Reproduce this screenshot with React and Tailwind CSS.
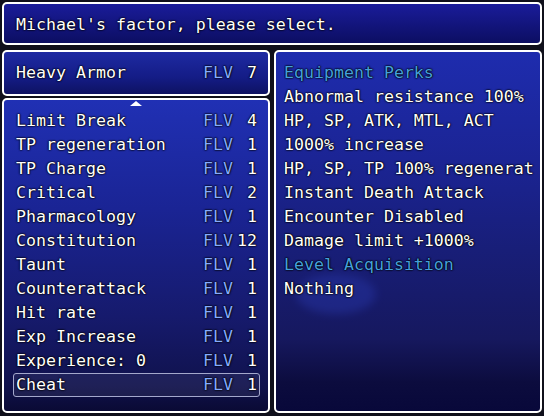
import React from "react";

const items = [
  ["Limit Break", "4"],
  ["TP regeneration", "1"],
  ["TP Charge", "1"],
  ["Critical", "2"],
  ["Pharmacology", "1"],
  ["Constitution", "12"],
  ["Taunt", "1"],
  ["Counterattack", "1"],
  ["Hit rate", "1"],
  ["Exp Increase", "1"],
  ["Experience: 0", "1"],
  ["Cheat", "1"],
];

const perks = [
  ["Equipment Perks", true],
  ["Abnormal resistance 100%", false],
  ["HP, SP, ATK, MTL, ACT", false],
  ["1000% increase", false],
  ["HP, SP, TP 100% regenerat", false],
  ["Instant Death Attack", false],
  ["Encounter Disabled", false],
  ["Damage limit +1000%", false],
  ["Level Acquisition", true],
  ["Nothing", false],
];

const win =
  "relative border-2 border-white rounded-[5px] shadow-[0_0_0_1px_#101018]";

function Row({ name, lv, selected }) {
  return (
    <div
      className={
        "flex h-[24px] items-center " +
        (selected
          ? "rounded-[3px] border border-[#a4a8cc] bg-[#ffffff10] px-[2px]"
          : "px-[3px]")
      }
    >
      <span className="flex-1 text-white">{name}</span>
      <span className="w-[33px] text-[#84aaff]">FLV</span>
      <span className="w-[21px] text-right text-white">{lv}</span>
    </div>
  );
}

export default function App() {
  return (
    <div
      className="flex h-[416px] w-[544px] flex-col gap-[5px] overflow-hidden bg-[#10101c] px-[2px] pb-[3px] pt-[2px] text-[16.6px] leading-[24px] [text-shadow:0_0_2px_#000,0_0_2px_#000,0_0_1px_#000]"
      style={{ fontFamily: '"DejaVu Sans Mono", monospace' }}
    >
      <div
        className={
          win +
          " flex h-[43px] shrink-0 items-center bg-[linear-gradient(to_bottom,#1a1c9a,#0c0e62)] pl-[12px] pt-[3px] text-white"
        }
      >
        Michael's factor, please select.
      </div>
      <div className="flex min-h-0 flex-1 gap-[4px]">
        <div className="flex w-[268px] flex-col gap-[2px]">
          <div
            className={
              win +
              " flex h-[46px] shrink-0 items-center bg-[linear-gradient(to_bottom,#1e2aa2,#141c86_60%,#0e1262)] pl-[9px] pr-[8px]"
            }
          >
            <div className="flex-1">
              <Row name="Heavy Armor" lv="7" />
            </div>
          </div>
          <div
            className={
              win +
              " flex-1 bg-[linear-gradient(to_bottom,#2030b4,#1a2494_35%,#161a6c_70%,#10124c_92%,#0a0a34)] pl-[9px] pr-[8px] pt-[9px]"
            }
          >
            <div className="absolute left-1/2 top-[1px] h-0 w-0 -translate-x-1/2 border-x-[6px] border-b-[5px] border-x-transparent border-b-white" />
            {items.map(([n, l], i) => (
              <Row key={n} name={n} lv={l} selected={i === items.length - 1} />
            ))}
          </div>
        </div>
        <div
          className={
            win +
            " flex-1 overflow-hidden whitespace-nowrap bg-[linear-gradient(to_bottom,#1e2cae,#1b2494_30%,#181e78_55%,#16185e_80%,#0c0c3e_92%,#08083a)] pl-[8px] pr-[4px] pt-[9px]"
          }
        >
          <div className="pointer-events-none absolute left-[20px] top-[222px] h-[40px] w-[80px] rounded-[50%] bg-[#2a3ab0] opacity-40 blur-[4px]" />
          <div className="relative overflow-hidden">
            {perks.map(([t, h], i) => (
              <div
                key={i}
                className={
                  "h-[24px] " + (h ? "text-[#45a0dc]" : "text-white")
                }
              >
                {t}
              </div>
            ))}
          </div>
        </div>
      </div>
    </div>
  );
}
